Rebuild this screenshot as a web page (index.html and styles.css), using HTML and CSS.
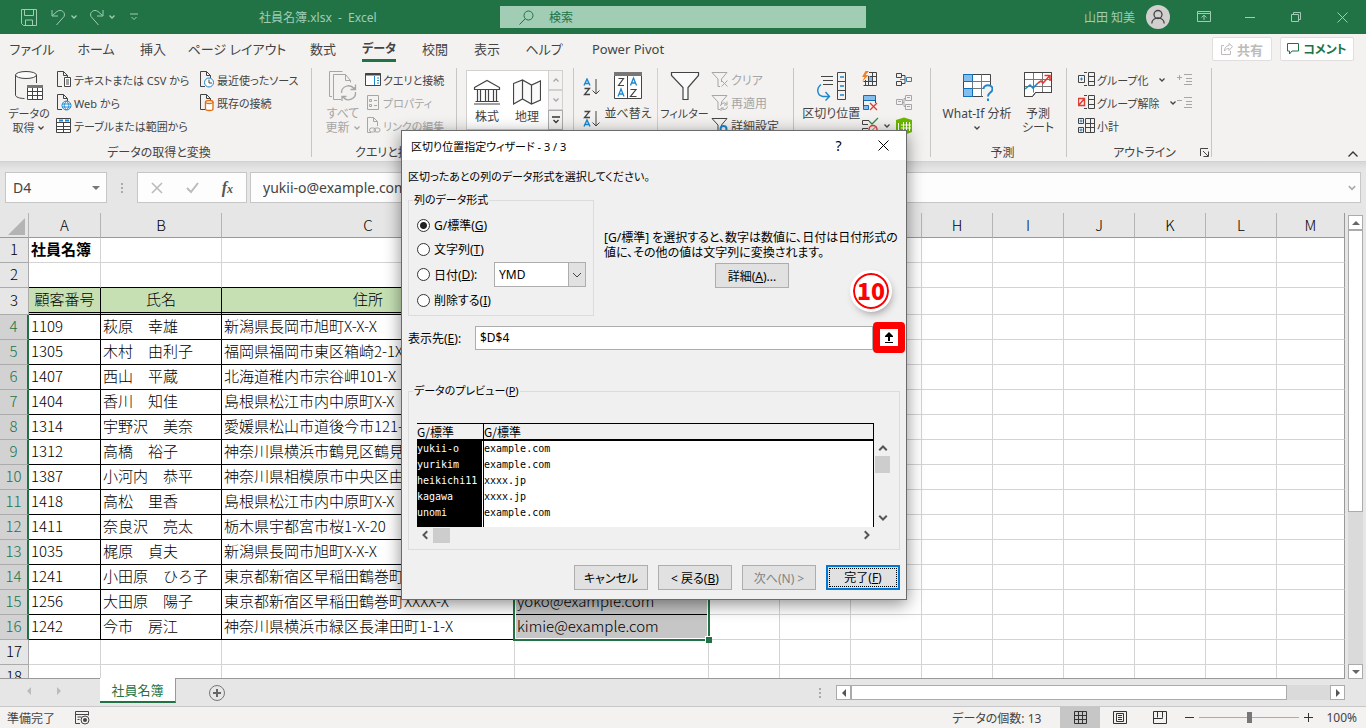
FILE: index.html
```html
<!DOCTYPE html>
<html lang="ja">

<head>
  <meta charset="UTF-8">
  <meta name="viewport" content="width=device-width, initial-scale=1.0">
  <title>社員名簿.xlsx - Excel</title>
  <link rel="stylesheet" href="styles.css">
</head>

<body>
  <svg class="defs" width="0" height="0">
    <symbol id="chev" viewBox="0 0 8 8"><path d="M1.500 2.500 4 5 6.500 2.500" fill="none" stroke="currentColor" stroke-width="1.300"/></symbol>
    <symbol id="page" viewBox="0 0 18 18"><path d="M6 15.500H1.500V.5h6l4 4V7M7.500.5v4h4" fill="none" stroke="#444"/></symbol>
    <symbol id="funnel" viewBox="0 0 18 18"><path d="M1 1.500h15L10.500 8v3M1 1.500 7 8v7.500h2" fill="none" stroke="currentColor"/></symbol>
  </svg>

  <header class="titlebar">
    <div class="quick">
      <button class="bare" aria-label="保存"><svg width="16" height="17" viewBox="0 0 16 17"><path d="M.5.5h15v16h-13l-2-2zM3.500.5v6h9v-6M4.500 16v-5h7v5" /></svg></button>
      <button class="bare undo" aria-label="元に戻す"><svg width="15" height="17" viewBox="0 0 15 17"><path d="M1 1v6h6M1.500 6.500 6 2.500c4-3 9 1 7 5L5.500 16"/></svg></button>
      <svg class="chev" width="8" height="8"><use href="#chev"/></svg>
      <button class="bare redo" aria-label="やり直し"><svg width="15" height="17" viewBox="0 0 15 17"><path d="M14 1v6H8M13.500 6.500 9 2.500c-4-3-9 1-7 5L9.500 16"/></svg></button>
      <svg class="chev" width="8" height="8"><use href="#chev"/></svg>
      <button class="bare custom" aria-label="カスタマイズ"><svg width="8" height="8" viewBox="0 0 8 8"><path d="M0 1h8M1.500 4 4 6.500 6.500 4"/></svg></button>
    </div>
    <div class="file-name">社員名簿.xlsx &nbsp;-&nbsp; Excel</div>
    <label class="search">
      <svg width="15" height="15" viewBox="0 0 15 15"><circle cx="9.500" cy="5.500" r="4.500"/><path d="M6.300 8.700.5 14.500"/></svg>
      <input type="text" placeholder="検索" aria-label="検索">
    </label>
    <div class="account">
      <span>山田 知美</span>
      <svg class="avatar" width="24" height="24" viewBox="0 0 24 24"><circle cx="12" cy="12" r="12" fill="#d2d0ce"/><g fill="none" stroke="#444" stroke-width="1.300"><circle cx="12" cy="9.500" r="4"/><path d="M5.800 18.500c0-3.500 3-5.500 6.200-5.500s6.200 2 6.200 5.500"/></g></svg>
    </div>
    <div class="window-buttons">
      <button class="bare" aria-label="リボンの表示"><svg width="14" height="12" viewBox="0 0 14 12"><path d="M.5.5h13v10H.5zM.5 2.500h13M7 9V4.500M4.500 6.500 7 4.200l2.500 2.300"/></svg></button>
      <button class="bare" aria-label="最小化"><svg width="10" height="12" viewBox="0 0 10 12"><path d="M0 6.500h10"/></svg></button>
      <button class="bare" aria-label="元のサイズ"><svg width="10" height="10" viewBox="0 0 10 10"><path d="M.5 2.500h7v7h-7zM2.500 2.500v-2h7v7h-2"/></svg></button>
      <button class="bare" aria-label="閉じる"><svg width="11" height="11" viewBox="0 0 11 11"><path d="m.5.5 10 10M10.500.5l-10 10"/></svg></button>
    </div>
  </header>

  <div class="tab-row">
    <nav class="tabs">
      <a href="#">ファイル</a>
      <a href="#">ホーム</a>
      <a href="#">挿入</a>
      <a href="#">ページ レイアウト</a>
      <a href="#">数式</a>
      <a href="#" class="active">データ</a>
      <a href="#">校閲</a>
      <a href="#">表示</a>
      <a href="#">ヘルプ</a>
      <a href="#">Power Pivot</a>
    </nav>
    <button class="share" disabled><svg width="12" height="12" viewBox="0 0 12 12"><path d="M3 2.500H.5v9h9V8M11.500 3.500 8 .5v2C5 2.500 3.500 5 3.500 8 5 6 6 5.500 8 5.500v2z"/></svg>共有</button>
    <button class="comment"><svg width="12" height="12" viewBox="0 0 12 12"><path d="M.5.500h11v7.500H5l-2.500 3V8h-2z"/></svg>コメント</button>
  </div>

  <section class="ribbon">
    <div class="group get-data">
      <div class="tools">
        <button class="big">
          <svg width="32" height="32" viewBox="0 0 32 32"><g fill="none" stroke="#444"><ellipse cx="13" cy="5" rx="10.500" ry="3.500" fill="#fafafa"/><path d="M2.500 5v20c0 2 4 3.500 9 3.500M23.500 5v8"/><path d="M14.500 15.500h15v14h-15zM14.500 21.500h15M14.500 25.500h15M19.500 18v11M24.500 18v11" fill="#fff"/></g><path d="M14 15h16v3H14z" fill="#777"/></svg>
          <span>データの<br>取得 <svg class="chev" width="8" height="8"><use href="#chev"/></svg></span>
        </button>
        <div class="stack first">
          <button><svg width="16" height="18" viewBox="0 0 16 18"><use href="#page" width="18" height="18"/><path d="M8.500 6.500h6v9h-6zM10 9h3M10 11h3M10 13h3" fill="#fff" stroke="#444"/></svg>テキストまたは CSV から</button>
          <button><svg width="16" height="18" viewBox="0 0 16 18"><use href="#page" width="18" height="18"/><circle cx="10.500" cy="11.500" r="4.500" fill="#fff" stroke="#1b87cf"/><path d="M6 10h9M6 13h9M10.500 7c-3 3-3 6 0 9M10.500 7c3 3 3 6 0 9" fill="none" stroke="#1b87cf"/></svg>Web から</button>
          <button><svg width="16" height="18" viewBox="0 0 16 18"><path d="M.5 1.500h14v14H.5zM.5 5.500h14M.5 9.500h14M.5 12.500h14M7.500 5v10" fill="#fff" stroke="#444"/><path d="M3 3.500h4M9 3.500h4" stroke="#1b87cf" stroke-width="2"/></svg>テーブルまたは範囲から</button>
        </div>
        <div class="stack">
          <button><svg width="16" height="18" viewBox="0 0 16 18"><use href="#page" width="18" height="18"/><circle cx="10" cy="11.500" r="4.500" fill="#fff" stroke="#1b87cf"/><path d="M10 8.500v3.500h3" fill="none" stroke="#444"/></svg>最近使ったソース</button>
          <button><svg width="16" height="18" viewBox="0 0 16 18"><use href="#page" width="18" height="18"/><path d="M6.500 8v7c0 2 7.500 2 7.500 0V8" fill="#fff" stroke="#e36c09" stroke-width="1.300"/><ellipse cx="10.250" cy="8" rx="3.750" ry="1.500" fill="#fff" stroke="#e36c09" stroke-width="1.300"/></svg>既存の接続</button>
        </div>
      </div>
      <div class="caption">データの取得と変換</div>
    </div>

    <div class="group queries">
      <div class="tools">
        <button class="big" disabled>
          <svg width="32" height="32" viewBox="0 0 32 32"><g fill="none" stroke="#a6a6a6"><path d="M5 26.500H2.500v-25h13M14 29.500H6.500v-25h12l5 6v2M18.500 4.500v6h5"/><path d="M14.500 23a7 7 0 0 1 12.500-4.500l1-1M28.500 22a7 7 0 0 1-12.500 5M28.500 14.500v5h-5M15 31v-4.500h4.500" stroke-width="1.300"/></g></svg>
          <span>すべて<br>更新 <svg class="chev" width="8" height="8"><use href="#chev"/></svg></span>
        </button>
        <div class="stack">
          <button><svg width="16" height="18" viewBox="0 0 16 18"><path d="M.5 2.500h15v12H.5z" fill="#fff" stroke="#444"/><path d="M0 3.500h16" stroke="#444" stroke-width="2"/><path d="M9.500 5v9M12 7h2M12 9.500h2M12 12h2" stroke="#1b87cf"/></svg>クエリと接続</button>
          <button disabled><svg width="16" height="18" viewBox="0 0 16 18"><path d="M2.500 1.500h11v14h-11zM4.500 5.500h2v2h-2zM4.500 10.500h2v2h-2zM9 6.500h3M9 11.500h3" fill="none" stroke="#a6a6a6"/></svg>プロパティ</button>
          <button disabled><svg width="16" height="18" viewBox="0 0 16 18"><path d="M6 15.500H2.500V.5h6l4 4V9M8.500.5v4h4" fill="none" stroke="#a6a6a6"/><rect x="4.500" y="11" width="6" height="4" rx="2" fill="none" stroke="#a6a6a6"/><rect x="9" y="11" width="6" height="4" rx="2" fill="none" stroke="#a6a6a6"/></svg>リンクの編集</button>
        </div>
      </div>
      <div class="caption">クエリと接続</div>
    </div>

    <div class="group types">
      <div class="tools">
        <div class="gallery">
          <button><svg width="28" height="28" viewBox="0 0 28 28"><path d="M1.500 8.500 14 1.500l12.500 7v2h-25zM4.500 10.500v12M7.500 10.500v12M12.500 10.500v12M15.500 10.500v12M20.500 10.500v12M23.500 10.500v12M2.500 22.500h23M1 25h26" fill="none" stroke="#444" stroke-width="1.200"/></svg>株式</button>
          <button><svg width="28" height="28" viewBox="0 0 28 28"><path d="m.5 4.500 9-3.500 9 5 9-4v19l-9 4-9-5-9 5zM9.500 1v19M18.500 6v19" fill="#fafafa" stroke="#444" stroke-width="1.200"/></svg>地理</button>
          <div class="gallery-nav">
            <button disabled aria-label="上へ"><svg class="chev up" width="8" height="8"><use href="#chev"/></svg></button>
            <button disabled aria-label="下へ"><svg class="chev" width="8" height="8"><use href="#chev"/></svg></button>
            <button class="more" aria-label="その他"><svg width="8" height="8" viewBox="0 0 8 8"><path d="M0 1h8M1.500 4 4 6.500 6.500 4" fill="none" stroke="#333" stroke-width="1.300"/></svg></button>
          </div>
        </div>
      </div>
    </div>

    <div class="group sort">
      <div class="tools">
        <div class="sort-keys">
          <button aria-label="昇順"><svg width="18" height="18" viewBox="0 0 18 18"><path d="M1 7.500 4 1l3 6.500M2 5.500h4" fill="none" stroke="#1b87cf" stroke-width="1.400"/><path d="M1.500 10.500h5l-5 6H7" fill="none" stroke="#444" stroke-width="1.300"/><path d="M13 1v15M9.500 12.500 13 16l3.500-3.500" fill="none" stroke="#444"/></svg></button>
          <button aria-label="降順"><svg width="18" height="18" viewBox="0 0 18 18"><path d="M1.500 1.500h5l-5 6H7" fill="none" stroke="#444" stroke-width="1.300"/><path d="M1 16.500 4 10l3 6.500M2 14.500h4" fill="none" stroke="#1b87cf" stroke-width="1.400"/><path d="M13 1v15M9.500 12.500 13 16l3.500-3.500" fill="none" stroke="#444"/></svg></button>
        </div>
        <button class="big">
          <svg width="32" height="32" viewBox="0 0 32 32"><path d="M2.500 2.500h27v26h-27zM15.500 5v24" fill="#fff" stroke="#444"/><path d="M2 2h28v4H2z" fill="#777"/><path d="M6.500 8.500h5l-5 7H12M18.500 19.500h5.500l-5.500 7h6" fill="none" stroke="#444" stroke-width="1.200"/><path d="M18.500 15.500 21.500 8l3 7.500M19.500 13h4M6 26.500 9 19l3 7.500M7 24h4" fill="none" stroke="#1b87cf" stroke-width="1.300"/></svg>
          <span>並べ替え</span>
        </button>
        <button class="big filter">
          <svg width="32" height="32" viewBox="0 0 32 32"><path d="M2.500 2.500h27v3L19 17.500v12h-5v-12L2.500 5.500z" fill="#fafafa" stroke="#444" stroke-width="1.200"/></svg>
          <span>フィルター</span>
        </button>
        <div class="stack">
          <button disabled><svg width="18" height="18" viewBox="0 0 18 18"><use href="#funnel" width="18" height="18"/><path d="m10.500 9.500 6 6M16.500 9.500l-6 6" stroke="currentColor"/></svg>クリア</button>
          <button disabled><svg width="18" height="18" viewBox="0 0 18 18"><use href="#funnel" width="18" height="18"/><path d="M9.500 12a3.500 3.500 0 0 1 6-2M16.500 12.500a3.500 3.500 0 0 1-6 2M16 7.500V11h-3M10 17v-3h3" fill="none" stroke="currentColor"/></svg>再適用</button>
          <button><svg width="18" height="18" viewBox="0 0 18 18"><use href="#funnel" width="18" height="18"/><circle cx="12.500" cy="12" r="3" fill="none" stroke="#1b87cf" stroke-width="2"/></svg>詳細設定</button>
        </div>
      </div>
    </div>

    <div class="group data-tools">
      <div class="tools">
        <button class="big">
          <svg width="32" height="32" viewBox="0 0 32 32"><path d="M22.500 2.500h8v27h-8zM22.500 11.500h8M22.500 20.500h8M6 6.500h12M8 10.500h10M8 14.500h10" fill="none" stroke="#444"/><path d="M25 7h4M25 16h4M25 25h4" stroke="#1b87cf" stroke-width="1.500"/><path d="M6 14.500c-5 4-4 11 2 12h6M10.500 22l4 4.500-4 4" fill="none" stroke="#1b87cf" stroke-width="1.400"/></svg>
          <span>区切り位置</span>
        </button>
        <div class="stack icons">
          <button aria-label="フラッシュ フィル"><svg width="18" height="18" viewBox="0 0 18 18"><path d="M8 1.500h7.500v13h-13M4.500 9v5.500M8.500 5.500h7M2.500 10.500h13M11.500 1v13M7.500 5v9" fill="none" stroke="#444"/><path d="M8 6h3v4H8z" fill="#83beec"/><path d="M4.500 0 1 6h2.500L1 11l6.500-7H4.500L8 0z" fill="#f08022"/></svg></button>
          <button aria-label="重複の削除"><svg width="18" height="18" viewBox="0 0 18 18"><path d="M2.500 1.500h12v5h-12zM2.500 11.500h5v4h-5z" fill="#83beec" stroke="#0f6fb8"/><path d="M2.500 6v6M14.500 6v3" stroke="#444"/><path d="m9 9 7 7M16 9l-7 7" stroke="#e03c31" stroke-width="1.300"/></svg></button>
          <button aria-label="データの入力規則"><svg width="18" height="18" viewBox="0 0 18 18"><path d="M8 3.500H1.500v4H7M7 11.500H1.500v4H7" fill="none" stroke="#444"/><path d="m8 4 3 3 6-6" fill="none" stroke="#2f8f46" stroke-width="1.300"/><circle cx="12" cy="12.500" r="4" fill="none" stroke="#e03c31" stroke-width="1.400"/><path d="m9 15.500 6-6" stroke="#e03c31"/></svg><svg class="chev" width="8" height="8"><use href="#chev"/></svg></button>
        </div>
        <div class="stack icons">
          <button aria-label="統合"><svg width="18" height="18" viewBox="0 0 18 18"><path d="M1.500 2.500h5v4h-5zM1.500 10.500h5v4h-5zM7 4.500h3v8H7" fill="none" stroke="#444"/><path d="M5 8.500h5M11.500 6.500h5v4h-5z" fill="none" stroke="#1b87cf"/></svg></button>
          <button disabled aria-label="リレーションシップ"><svg width="18" height="18" viewBox="0 0 18 18"><path d="M1.500 5.500h6v5h-6zM10.500 1.500h6v5h-6zM10.500 10.500h6v5h-6zM7.500 8.500H9v-4h1.500M9 8.500v4h1.500M3 7.500h3M12 3.500h3M12 12.500h3" fill="none" stroke="#a6a6a6"/></svg></button>
          <button aria-label="データ モデルの管理"><svg width="18" height="18" viewBox="0 0 18 18"><path d="m1 3 8-2.500L17 3v12l-8 3-8-3z" fill="#6bb700"/><path d="M3.500 6v8M6 8h10M6 11h10M8.500 5v10M11.500 5v10M14.500 5v9" stroke="#fff"/></svg></button>
        </div>
      </div>
    </div>

    <div class="group forecast">
      <div class="tools">
        <button class="big">
          <svg width="32" height="32" viewBox="0 0 32 32"><path d="M2.500 4.500h27v22h-27z" fill="#fff" stroke="#444"/><path d="M2.500 11.500h27M2.500 18.500h27M11.500 4.500v22M20.500 4.500v22" stroke="#777"/><path d="M2.500 4.500h9v7h-9zM2.500 18.500h9v8h-9z" fill="#83beec" stroke="#0f6fb8"/><path d="M22 15h10v17H22z" fill="#f3f2f1"/><path d="M22.500 19c0-5 9-5 9 0 0 4-4.500 3-4.500 7.500M27 28.500v2.500" fill="none" stroke="#1b87cf" stroke-width="2"/></svg>
          <span>What-If 分析<br><svg class="chev" width="8" height="8"><use href="#chev"/></svg></span>
        </button>
        <button class="big">
          <svg width="32" height="32" viewBox="0 0 32 32"><path d="M2.500 2.500h27v20h-16l-3 4h-8z" fill="#fff" stroke="#444"/><path d="M2.500 9.500h27M2.500 16.500h27M11.500 2.500v20M20.500 2.500v20" stroke="#777"/><path d="M2.500 2.500h27v20h-16l-3 4h-8z" fill="none" stroke="#444"/><path d="m3 19 5-4 3 3 5-5" fill="none" stroke="#1b87cf" stroke-width="1.600"/><path d="m16 13 3-2 2 2 6.500-7M22.500 5.500H28V11" fill="none" stroke="#e03c31" stroke-width="1.600"/></svg>
          <span>予測<br>シート</span>
        </button>
      </div>
      <div class="caption">予測</div>
    </div>

    <div class="group outline">
      <div class="tools">
        <div class="stack">
          <button><svg width="18" height="18" viewBox="0 0 18 18"><path d="M.5 4.500h6v7h-6zM10.500 1.500h6v13h-6zM10.500 5.500h6M10.500 10.500h6M9 1.500H6M9 14.500H6" fill="none" stroke="#444"/><path d="M2 8h3M3.500 6.500v3" stroke="#1b87cf"/></svg>グループ化 <svg class="chev" width="8" height="8"><use href="#chev"/></svg></button>
          <button><svg width="18" height="18" viewBox="0 0 18 18"><path d="M10.500 1.500h6v13h-6zM10.500 5.500h6M10.500 10.500h6M9 1.500H6M9 14.500H6" fill="none" stroke="#444"/><path d="M.5 4.500h6v7h-6zM.5 11.500l6-7" fill="none" stroke="#e03c31" stroke-width="1.400"/></svg>グループ解除 <svg class="chev" width="8" height="8"><use href="#chev"/></svg></button>
          <button><svg width="18" height="18" viewBox="0 0 18 18"><path d="M.5 1.500h5v5h-5zM.5 10.500h5v5h-5zM7.500 1.500h9v14h-9zM7.500 6.500h9M7.500 10.500h9M12.500 1.500v14" fill="none" stroke="#444"/><path d="M1.500 4h3M3 2.500v3M1.500 13h3M3 11.500v3" stroke="#1b87cf"/></svg>小計</button>
        </div>
        <div class="stack details">
          <button disabled aria-label="詳細の表示"><svg width="16" height="16" viewBox="0 0 16 16"><path d="M0 5.500h5M2.500 3v5M7 2.500h8M9 6.500h6M9 9.500h6M7 12.500h8" stroke="#a6a6a6"/></svg></button>
          <button disabled aria-label="詳細を表示しない"><svg width="16" height="16" viewBox="0 0 16 16"><path d="M0 5.500h5M7 2.500h8M9 6.500h6M9 9.500h6M7 12.500h8" stroke="#a6a6a6"/></svg></button>
        </div>
      </div>
      <div class="caption">アウトライン</div>
      <button class="launcher" aria-label="アウトラインの設定"><svg width="9" height="9" viewBox="0 0 9 9"><path d="M.5 8V.5H8M3 3l5 5M8.500 3.500v5h-5" fill="none" stroke="#444"/></svg></button>
    </div>
    <button class="collapse" aria-label="リボンを折りたたむ"><svg width="10" height="6" viewBox="0 0 10 6"><path d="M.5 5.500 5 1l4.500 4.500" fill="none" stroke="#333" stroke-width="1.300"/></svg></button>
  </section>

  <div class="formula-row">
    <div class="name-box">
      <input type="text" value="D4" aria-label="名前ボックス">
      <svg width="8" height="4" viewBox="0 0 8 4"><path d="M0 0h8L4 4z" fill="#777"/></svg>
    </div>
    <div class="dots"><i></i><i></i><i></i></div>
    <div class="fx-box">
      <svg width="12" height="12" viewBox="0 0 12 12"><path d="m1 1 10 10M11 1 1 11" stroke="#bbb" stroke-width="1.600"/></svg>
      <svg width="13" height="12" viewBox="0 0 13 12"><path d="m1 6 4 4 7-9" fill="none" stroke="#bbb" stroke-width="2"/></svg>
      <em>f<small>x</small></em>
    </div>
    <div class="formula">
      <input type="text" value="yukii-o@example.com" aria-label="数式バー">
      <svg class="chev" width="10" height="10"><use href="#chev"/></svg>
    </div>
  </div>

  <main class="sheet">
    <div class="sheet-view">
      <table class="cells">
        <colgroup>
          <col class="c-row"><col class="c-id"><col class="c-name"><col class="c-address"><col class="c-mail">
          <col class="c-std"><col class="c-std"><col class="c-std"><col class="c-std"><col class="c-std"><col class="c-std"><col class="c-std"><col class="c-std"><col>
        </colgroup>
        <thead>
          <tr>
            <th class="corner"><svg width="17" height="17" viewBox="0 0 17 17"><path d="M17 0v17H0z" fill="#b4b4b4"/></svg></th>
            <th>A</th><th>B</th><th>C</th><th class="on">D</th><th>E</th><th>F</th><th>G</th><th>H</th><th>I</th><th>J</th><th>K</th><th>L</th><th>M</th>
          </tr>
        </thead>
        <tbody id="rows"></tbody>
      </table>
    </div>
    <div class="vscroll">
      <button aria-label="上へスクロール"><svg width="8" height="4" viewBox="0 0 8 4"><path d="M0 4h8L4 0z" fill="#666"/></svg></button>
      <div class="track"><div class="thumb"></div></div>
      <button aria-label="下へスクロール"><svg width="8" height="4" viewBox="0 0 8 4"><path d="M0 0h8L4 4z" fill="#666"/></svg></button>
    </div>
  </main>

  <div class="sheet-bar">
    <div class="sheet-nav">
      <svg width="4" height="8" viewBox="0 0 4 8"><path d="M4 0v8L0 4z" fill="#bbb"/></svg>
      <svg width="4" height="8" viewBox="0 0 4 8"><path d="M0 0v8l4-4z" fill="#bbb"/></svg>
    </div>
    <button class="sheet-tab">社員名簿</button>
    <button class="bare add" aria-label="新しいシート"><svg width="16" height="16" viewBox="0 0 16 16"><circle cx="8" cy="8" r="7.500" fill="none" stroke="#777"/><path d="M4 8h8M8 4v8" stroke="#666" stroke-width="2"/></svg></button>
    <div class="dots"><i></i><i></i><i></i></div>
    <div class="hscroll">
      <button aria-label="左へスクロール"><svg width="4" height="8" viewBox="0 0 4 8"><path d="M4 0v8L0 4z" fill="#555"/></svg></button>
      <div class="track"><div class="thumb"></div></div>
      <button aria-label="右へスクロール"><svg width="4" height="8" viewBox="0 0 4 8"><path d="M0 0v8l4-4z" fill="#555"/></svg></button>
    </div>
  </div>

  <footer class="status">
    <span>準備完了</span>
    <svg class="macro" width="15" height="14" viewBox="0 0 15 14"><path d="M5 12.500H.5V.5h13v4M.5 3.500h13M2.500 6h4M2.500 8.500h2" fill="none" stroke="#444"/><circle cx="10" cy="9" r="4" fill="none" stroke="#444"/><circle cx="10" cy="9" r="2" fill="#444"/></svg>
    <span class="count">データの個数: 13</span>
    <div class="views">
      <button class="active" aria-label="標準"><svg width="13" height="13" viewBox="0 0 13 13"><path d="M.5.500h12v12H.5zM.5 4.500h12M.5 8.500h12M4.500.5v12M8.500.5v12"/></svg></button>
      <button aria-label="ページ レイアウト"><svg width="14" height="13" viewBox="0 0 14 13"><path d="M.5.500h13v12H.5zM3.500 2.500h7v8h-7zM5 4.500h4M5 6.500h4M5 8.500h4"/></svg></button>
      <button aria-label="改ページ プレビュー"><svg width="14" height="13" viewBox="0 0 14 13"><path d="M.5.500h13v12H.5zM4.500.5v6M9.500.5v6M.5 7.500h9v-1"/></svg></button>
    </div>
    <button class="bare step" aria-label="縮小"><svg width="9" height="9" viewBox="0 0 9 9"><path d="M0 4.500h9"/></svg></button>
    <input class="zoom" type="range" min="0" max="100" value="50" aria-label="ズーム">
    <button class="bare step" aria-label="拡大"><svg width="9" height="9" viewBox="0 0 9 9"><path d="M0 4.500h9M4.500 0v9"/></svg></button>
    <span class="percent">100%</span>
  </footer>

  <!-- 区切り位置指定ウィザード -->
  <div class="wizard" role="dialog" aria-labelledby="wizard-title">
    <div class="wizard-head">
      <span id="wizard-title">区切り位置指定ウィザード - 3 / 3</span>
      <button class="bare help" aria-label="ヘルプ">?</button>
      <button class="bare" aria-label="閉じる"><svg width="11" height="11" viewBox="0 0 11 11"><path d="m.5.5 10 10M10.500.5l-10 10" stroke="#000"/></svg></button>
    </div>
    <div class="wizard-body">
      <p class="lead">区切ったあとの列のデータ形式を選択してください。</p>
      <div class="options">
        <fieldset class="formats">
          <legend>列のデータ形式</legend>
          <label><input type="radio" name="format" checked>G/標準(<u>G</u>)</label>
          <label><input type="radio" name="format">文字列(<u>T</u>)</label>
          <div class="date-row">
            <label><input type="radio" name="format">日付(<u>D</u>):</label>
            <div class="select">
              <select aria-label="日付の形式"><option>YMD</option></select>
              <svg width="12" height="12" viewBox="0 0 12 12"><path d="M2 4l4 4 4-4" fill="none" stroke="#444"/></svg>
            </div>
          </div>
          <label><input type="radio" name="format">削除する(<u>I</u>)</label>
        </fieldset>
        <div class="hint">
          <p>[G/標準] を選択すると、数字は数値に、日付は日付形式の<br>値に、その他の値は文字列に変換されます。</p>
          <button class="push">詳細(<u>A</u>)...</button>
        </div>
      </div>
      <div class="dest">
        <label for="dest">表示先(<u>E</u>):</label>
        <input type="text" id="dest" value="$D$4">
        <button class="pick" aria-label="範囲を選択"><svg width="10" height="11" viewBox="0 0 10 11"><path d="M5 0 1 4v1h3v4h2V5h3V4zM1 10h8v1H1z" fill="#000"/></svg></button>
        <div class="badge">10</div>
      </div>
      <fieldset class="preview">
        <legend>データのプレビュー(<u>P</u>)</legend>
        <div class="preview-top">
          <div class="preview-view">
            <table>
              <thead><tr><th>G/標準</th><th>G/標準</th></tr></thead>
              <tbody>
                <tr><td>yukii-o</td><td>example.com</td></tr>
                <tr><td>yurikim</td><td>example.com</td></tr>
                <tr><td>heikichi11</td><td>xxxx.jp</td></tr>
                <tr><td>kagawa</td><td>xxxx.jp</td></tr>
                <tr><td>unomi</td><td>example.com</td></tr>
                <tr><td></td><td></td></tr>
              </tbody>
            </table>
          </div>
          <div class="pv">
            <svg class="chev up" width="12" height="12"><use href="#chev"/></svg>
            <div class="thumb"></div>
            <svg class="chev" width="12" height="12"><use href="#chev"/></svg>
          </div>
        </div>
        <div class="ph">
          <svg class="chev left" width="12" height="12"><use href="#chev"/></svg>
          <div class="thumb"></div>
          <svg class="chev right" width="12" height="12"><use href="#chev"/></svg>
        </div>
      </fieldset>
      <div class="actions">
        <button class="push">キャンセル</button>
        <button class="push">&lt; 戻る(<u>B</u>)</button>
        <button class="push" disabled>次へ(N) &gt;</button>
        <button class="push primary"><span>完了(<u>F</u>)</span></button>
      </div>
    </div>
  </div>

  <script src="script.js"></script>
</body>

</html>
```
FILE: styles.css
```css
* {
  box-sizing: border-box;
}
body {
  margin: 0;
  height: 100vh;
  display: flex;
  flex-direction: column;
  overflow: hidden;
  position: relative;
  background: #e6e6e6;
  color: #444;
  font-family: "Noto Sans", "Noto Sans CJK JP", sans-serif;
  font-size: 12px;
  font-feature-settings: "palt";
}
button,
input,
select {
  font: inherit;
  font-feature-settings: inherit;
  color: inherit;
}
button {
  margin: 0;
  padding: 0;
  border: 0;
  background: none;
}
p {
  margin: 0;
}
svg {
  flex: none;
  display: block;
}
.defs {
  position: absolute;
}
.bare {
  display: flex;
  align-items: center;
  justify-content: center;
}

/* タイトルバー */
.titlebar {
  display: flex;
  align-items: center;
  flex: none;
  height: 34px;
  background: #217346;
  color: #a0cdb4;
}
.titlebar svg {
  fill: none;
  stroke: #a0cdb4;
}
.titlebar .chev {
  stroke: none;
}
.quick {
  display: flex;
  align-items: center;
  width: 259px;
  padding-left: 21px;
}
.quick .undo {
  margin-left: 14px;
  margin-right: 4px;
}
.quick .redo {
  margin-left: 11px;
  margin-right: 4px;
}
.quick .custom {
  margin-left: 14px;
}
.file-name {
  width: 241px;
}
.search {
  display: flex;
  align-items: center;
  gap: 15px;
  width: 366px;
  height: 22px;
  padding-left: 19px;
  background: #a0cdb4;
}
.search svg {
  stroke: #217346;
}
.search input {
  flex: 1;
  min-width: 0;
  padding: 0;
  border: 0;
  background: none;
}
.search input::placeholder {
  color: #217346;
  opacity: 1;
}
.account {
  flex: 1;
  display: flex;
  align-items: center;
  justify-content: flex-end;
  gap: 11px;
}
.account .avatar {
  stroke: none;
}
.window-buttons {
  display: flex;
  width: 196px;
  padding-left: 11px;
}
.window-buttons .bare {
  width: 46px;
  height: 34px;
}

/* タブ */
.tab-row {
  display: flex;
  flex: none;
  height: 32px;
  padding: 3px 12px 0 0;
  background: #f3f2f1;
}
.tabs {
  flex: 1;
  display: grid;
  grid-template-columns: 64px 64px 50px 118px 54px 58px 54px 50px 64px 104px;
}
.tabs a {
  justify-self: center;
  height: 25px;
  line-height: 24px;
  color: #444;
  font-size: 13px;
  text-decoration: none;
  white-space: nowrap;
}
.tabs .active {
  border-bottom: 3px solid #217346;
  font-size: 12px;
  font-weight: bold;
}
.share,
.comment {
  display: flex;
  align-items: center;
  justify-content: center;
  gap: 4px;
  height: 24px;
  border: 1px solid #e1dfdd;
  border-radius: 2px;
  background: #fff;
  font-weight: bold;
}
.share {
  width: 60px;
  margin-right: 8px;
  color: #bdbbb9;
  font-size: 13px;
}
.comment {
  width: 74px;
  color: #217346;
}
.share svg,
.comment svg {
  fill: none;
  stroke: currentColor;
}

/* リボン */
.ribbon {
  position: relative;
  display: flex;
  flex: none;
  height: 95px;
  background: #f3f2f1;
}
.group {
  position: relative;
  display: flex;
  flex-direction: column;
  justify-content: space-between;
  height: 89px;
  margin-top: 2px;
  border-right: 1px solid #c8c6c4;
}
.tools {
  display: flex;
  height: 72px;
}
.caption {
  height: 13px;
  line-height: 17px;
  text-align: center;
  white-space: nowrap;
}
.get-data {
  width: 312px;
  padding-left: 7px;
}
.queries {
  width: 145px;
  padding-left: 9px;
}
.types {
  width: 117px;
  padding: 2px 10px 0 9px;
}
.sort {
  width: 220px;
  padding-left: 9px;
}
.data-tools {
  width: 137px;
  padding-left: 8px;
}
.forecast {
  width: 136px;
  padding-left: 8px;
}
.outline {
  width: 145px;
  padding-left: 11px;
}
.big {
  display: flex;
  flex-direction: column;
  align-items: center;
  width: 44px;
  padding-top: 2px;
  line-height: 14px;
  white-space: nowrap;
}
.big > svg {
  margin-bottom: 5px;
}
.big .chev,
.stack .chev {
  display: inline-block;
}
button:disabled {
  color: #a6a6a6;
}
.share:disabled {
  color: #bdbbb9;
}
.stack {
  display: flex;
  flex-direction: column;
}
.stack button {
  display: flex;
  align-items: center;
  gap: 2px;
  height: 23px;
  white-space: nowrap;
}
.stack.first {
  width: 143px;
  margin-left: 5px;
}
.get-data .stack,
.queries .stack,
.outline .stack,
.get-data .big,
.filter {
  font-size: 11px;
}
.gallery {
  display: flex;
  width: 97px;
  height: 60px;
  border: 1px solid #d2d0ce;
  background: #fff;
}
.gallery > button {
  width: 40px;
  display: flex;
  flex-direction: column;
  align-items: center;
  justify-content: space-between;
  padding: 8px 0 4px;
  line-height: 16px;
}
.gallery-nav {
  width: 15px;
  margin: -1px -1px -1px auto;
}
.gallery-nav button {
  display: flex;
  align-items: center;
  justify-content: center;
  width: 15px;
  height: 20px;
  border: 1px solid #d2d0ce;
  background: #f3f2f1;
}
.gallery-nav .more {
  border-color: #aaa;
}
.up {
  transform: rotate(180deg);
}
.left {
  transform: rotate(90deg);
}
.right {
  transform: rotate(-90deg);
}
.sort-keys {
  display: flex;
  flex-direction: column;
  gap: 14px;
  padding: 10px 2px 0 0;
}
.sort .big {
  width: 50px;
}
.sort .filter {
  margin-left: 4px;
  border-left: 1px solid #d2d0ce;
  width: 54px;
}
.data-tools .big {
  width: 64px;
}
.icons {
  width: 38px;
}
.icons button {
  gap: 4px;
}
.forecast .big {
  width: 76px;
}
.forecast .big + .big {
  width: 46px;
}
.outline .stack {
  width: 108px;
}
.outline .stack button {
  gap: 1px;
}
.outline .stack .chev {
  margin-left: 8px;
}
.launcher {
  position: absolute;
  right: 2px;
  bottom: 0;
}
.collapse {
  position: absolute;
  right: 8px;
  bottom: 4px;
}

/* 数式バー */
.formula-row {
  display: flex;
  flex: none;
  height: 52px;
  padding: 10px 5px;
  border-top: 1px solid #d2d2d2;
  background: linear-gradient(#d8d8d8, #e6e6e6 8px);
}
.formula-row > div {
  display: flex;
  align-items: center;
  height: 31px;
}
.formula-row .dots {
  gap: 2px;
}
.name-box,
.fx-box,
.formula {
  border: 1px solid #c6c6c6;
  background: #fdfdfd;
}
.name-box {
  width: 102px;
  padding: 0 6px 0 7px;
}
.name-box input,
.formula input {
  flex: 1;
  min-width: 0;
  padding: 0;
  border: 0;
  background: none;
  font-size: 14px;
}
.dots {
  display: flex;
  flex-direction: column;
  justify-content: center;
  gap: 2px;
  width: 30px;
}
.dots i {
  width: 2px;
  height: 2px;
  background: #aaa;
}
.fx-box {
  width: 110px;
  justify-content: space-between;
  padding: 0 13px;
}
.fx-box em {
  color: #555;
  font: italic bold 16px "Liberation Serif", serif;
}
.fx-box small {
  font-size: 12px;
}
.formula {
  flex: 1;
  margin-left: 3px;
  padding: 0 3px 0 12px;
}
.formula .chev {
  color: #aaa;
}

/* シート */
.sheet {
  flex: 1;
  display: flex;
  min-height: 0;
}
.sheet-view {
  flex: 1;
  min-width: 0;
  overflow: hidden;
  border-bottom: 1px solid #999;
}
.cells {
  width: 100%;
  table-layout: fixed;
  border-collapse: separate;
  border-spacing: 0;
  background: #fff;
  color: #000;
  font-family: "Noto Sans CJK JP", sans-serif;
  font-size: 15px;
  font-weight: 300;
  font-feature-settings: normal;
  line-height: 22px;
}
.c-row {
  width: 29px;
}
.c-id {
  width: 72px;
}
.c-name {
  width: 121px;
}
.c-address {
  width: 293px;
}
.c-mail {
  width: 194px;
}
.c-std {
  width: 71px;
}
.cells th,
.cells td {
  height: 25px;
  padding: 0 2px 2px;
  border-right: 1px solid #d4d4d4;
  border-bottom: 1px solid #d4d4d4;
  text-align: left;
  white-space: nowrap;
  overflow: hidden;
}
.cells th {
  padding: 0 0 2px;
  font-weight: 300;
  text-align: center;
  background: #e6e6e6;
  border-color: #ababab;
}
.cells thead th {
  padding: 0;
  border-right-color: #b4b4b4;
  border-bottom-color: #999;
}
.cells tr > :last-child {
  border-right-color: #999;
}
.cells .corner svg {
  margin: 3px 3px 0 auto;
}
.cells .on {
  background: #d2d2d2;
  color: #217346;
}
.cells tbody .on {
  border-right: 2px solid #217346;
}
.cells .title {
  font-weight: bold;
}
.cells .boxed {
  border-color: #000;
}
.cells .head {
  height: 27px;
  border-bottom: 3px double #000;
  background: #c6e0b4;
  text-align: center;
}
.cells .above {
  border-bottom-color: #000;
}
.cells .picked {
  background: #c6c6c6;
}
.cells .current {
  position: relative;
  overflow: visible;
}
.selection {
  position: absolute;
  top: -1px;
  left: -2px;
  width: 197px;
  height: 327px;
  border: 2px solid #217346;
  box-shadow: inset 0 0 0 1px #fff;
}
.selection::after {
  content: "";
  position: absolute;
  right: -4px;
  bottom: -4px;
  width: 6px;
  height: 6px;
  border: 1px solid #fff;
  border-width: 1px 0 0 1px;
  background: #217346;
}
.vscroll {
  display: flex;
  flex-direction: column;
  width: 21px;
  padding: 2px 3px 0;
}
.vscroll button,
.hscroll button {
  display: flex;
  align-items: center;
  justify-content: center;
  width: 15px;
  height: 15px;
  border: 1px solid #ababab;
  background: #fff;
}
.track {
  flex: 1;
  background: #dadada;
}
.vscroll .thumb {
  height: 65%;
  border: 1px solid #ababab;
  background: #fff;
}

/* シート見出し */
.sheet-bar {
  display: flex;
  flex: none;
  height: 27px;
  padding-right: 21px;
}
.sheet-nav {
  display: flex;
  gap: 26px;
  width: 100px;
  padding: 8px 0 0 27px;
}
.sheet-tab {
  width: 76px;
  height: 25px;
  margin-top: -1px;
  border: 1px solid #999;
  border-width: 0 1px 2px 0;
  border-bottom-color: #217346;
  background: #fff;
  color: #217346;
  font-size: 13px;
}
.add {
  width: 82px;
}
.sheet-bar .dots {
  margin-left: auto;
  width: 17px;
}
.hscroll {
  display: flex;
  width: 509px;
  margin-top: 6px;
}
.hscroll .track {
  height: 15px;
}
.hscroll .thumb {
  width: 91%;
  height: 15px;
  border: 1px solid #ababab;
  background: #fff;
}

/* ステータスバー */
.status {
  display: flex;
  align-items: center;
  flex: none;
  height: 22px;
  padding: 0 9px 0 7px;
  border-top: 1px solid #c8c8c8;
  background: #f3f2f1;
}
.macro {
  margin-left: 20px;
}
.count {
  margin-left: auto;
}
.views {
  display: flex;
  height: 100%;
  margin: 0 5px 0 19px;
}
.views button {
  display: flex;
  align-items: center;
  justify-content: center;
  width: 40px;
}
.views .active {
  background: #c6c6c6;
}
.views svg,
.step svg {
  fill: none;
  stroke: #333;
}
.zoom {
  appearance: none;
  width: 100px;
  height: 15px;
  margin: 0 5px;
  background: linear-gradient(#ababab, #ababab) center / 100% 1px no-repeat;
}
.zoom::-webkit-slider-thumb {
  appearance: none;
  width: 5px;
  height: 11px;
  background: #777;
}
.percent {
  margin-left: 13px;
}

/* ウィザード */
.wizard {
  position: absolute;
  left: 401px;
  top: 130px;
  width: 506px;
  border: 1px solid #6b6b6b;
  background: #f0f0f0;
  color: #000;
  box-shadow: 0 4px 16px rgba(0, 0, 0, 0.45);
}
.wizard-head {
  display: flex;
  align-items: center;
  height: 29px;
  padding-left: 9px;
  background: #fff;
}
#wizard-title {
  flex: 1;
}
.wizard-head .bare {
  width: 45px;
  height: 29px;
}
.wizard-head .help {
  font-size: 14px;
}
.wizard-body {
  padding: 8px 6px 9px;
}
.lead {
  line-height: 18px;
}
#wizard-title,
.lead,
.wizard legend {
  font-size: 11px;
}
.wizard fieldset {
  margin: 0;
  border: 1px solid #dcdcdc;
}
.wizard legend {
  padding: 0 1px;
  line-height: 18px;
}
.options {
  display: flex;
  margin-top: 5px;
}
.formats {
  flex: none;
  width: 186px;
  height: 125px;
  padding: 4px 7px 0 8px;
}
.formats legend,
.preview legend {
  margin-left: -4px;
}
.formats label {
  display: flex;
  align-items: center;
  height: 24px;
}
.formats input {
  appearance: none;
  width: 13px;
  height: 13px;
  margin: 0 4px 0 0;
  border: 1px solid #333;
  border-radius: 50%;
  background: #fff;
}
.formats input:checked {
  background: radial-gradient(#222 3px, #fff 4px);
}
.date-row {
  display: flex;
  align-items: center;
  justify-content: space-between;
  height: 27px;
}
.select {
  position: relative;
}
.select select {
  display: block;
  appearance: none;
  width: 92px;
  height: 25px;
  padding: 0 4px;
  border: 1px solid #adadad;
  border-radius: 0;
  background: linear-gradient(to right, #fff 73px, #adadad 73px, #adadad 74px, #e1e1e1 74px);
}
.select svg {
  position: absolute;
  right: 3px;
  top: 7px;
}
.hint {
  flex: 1;
  padding: 39px 0 0 10px;
}
.hint p {
  line-height: 15px;
  white-space: nowrap;
}
.hint .push {
  display: block;
  margin: 3px auto 0 111px;
}
.push {
  width: 74px;
  height: 25px;
  border: 1px solid #adadad;
  background: #e1e1e1;
  white-space: nowrap;
}
.push:disabled {
  color: #838383;
}
.primary {
  padding: 1px;
  border: 2px solid #0078d7;
}
.primary span {
  display: block;
  height: 19px;
  line-height: 17px;
  border: 1px dotted #000;
}
.dest {
  position: relative;
  display: flex;
  align-items: center;
  height: 31px;
  margin: 6px -5px 0 0;
}
.dest label {
  width: 67px;
}
.dest input {
  flex: 1;
  min-width: 0;
  height: 24px;
  padding: 0 4px;
  border: 1px solid #adadad;
  background: #fff;
}
.pick {
  display: flex;
  align-items: center;
  justify-content: center;
  width: 32px;
  height: 31px;
  border: 7px solid #f00;
  border-radius: 4px;
  background: #fff;
}
.badge {
  position: absolute;
  right: 16px;
  top: -49px;
  width: 36px;
  height: 36px;
  border: 2px solid #f00;
  border-radius: 50%;
  background: #fff;
  outline: 3px solid #fff;
  box-shadow: 2px 4px 8px rgba(0, 0, 0, 0.4);
  color: #f00;
  font: 900 23px/31px "Noto Sans CJK JP", "Open Sans", sans-serif;
  text-align: center;
}
.wizard .preview {
  height: 168px;
  margin-top: 29px;
  padding: 23px 8px 0;
}
.preview-top {
  display: flex;
}
.preview-view {
  flex: 1;
  height: 104px;
  overflow: hidden;
  border: 1px solid #000;
  border-width: 1px 1px 0 0;
  background: #fff;
}
.preview table {
  width: 100%;
  table-layout: fixed;
  border-spacing: 0;
  font-family: "DejaVu Sans Mono", "Noto Sans CJK JP", monospace;
  font-size: 10px;
  line-height: 16px;
}
.preview th,
.preview td {
  height: 16px;
  padding: 0;
  text-align: left;
}
.preview th {
  height: 17px;
  border-bottom: 2px solid #000;
  background: #f0f0f0;
  font-family: "Noto Sans CJK JP", sans-serif;
  font-size: 12px;
  font-weight: normal;
  font-feature-settings: normal;
  line-height: 15px;
}
.preview th:first-child,
.preview td:first-child {
  width: 67px;
  border-right: 1px solid #000;
}
.preview td:first-child {
  background: #000;
  color: #fff;
  box-shadow: inset -1px 0 #fff;
}
.pv {
  display: flex;
  flex-direction: column;
  align-items: center;
  width: 17px;
  padding: 19px 0 3px;
  color: #555;
}
.pv .thumb {
  width: 15px;
  height: 17px;
  margin-top: 2px;
  margin-bottom: auto;
  background: #cdcdcd;
}
.ph {
  display: flex;
  align-items: center;
  width: 458px;
  padding: 0 2px;
  color: #555;
}
.ph .thumb {
  width: 17px;
  height: 15px;
  margin: 1px auto 0 2px;
  background: #cdcdcd;
}
.actions {
  display: flex;
  justify-content: flex-end;
  gap: 10px;
  margin-top: 15px;
}
```
FILE: script.js
```js
const people = [
  ['1109', '萩原　幸雄', '新潟県長岡市旭町X-X-X', 'yukii-o@example.com'],
  ['1305', '木村　由利子', '福岡県福岡市東区箱崎2-1X', ''],
  ['1407', '西山　平蔵', '北海道稚内市宗谷岬101-X', ''],
  ['1404', '香川　知佳', '島根県松江市内中原町X-X', ''],
  ['1314', '宇野沢　美奈', '愛媛県松山市道後今市121-X', ''],
  ['1312', '高橋　裕子', '神奈川県横浜市鶴見区鶴見', ''],
  ['1387', '小河内　恭平', '神奈川県相模原市中央区由', ''],
  ['1418', '高松　里香', '島根県松江市内中原町X-X', ''],
  ['1411', '奈良沢　亮太', '栃木県宇都宮市桜1-X-20', ''],
  ['1035', '梶原　貞夫', '新潟県長岡市旭町X-X-X', ''],
  ['1241', '小田原　ひろ子', '東京都新宿区早稲田鶴巻町', ''],
  ['1256', '大田原　陽子', '東京都新宿区早稲田鶴巻町XXXX-X', 'yoko@example.com'],
  ['1242', '今市　房江', '神奈川県横浜市緑区長津田町1-1-X', 'kimie@example.com']
]
const EMPTY = '<td></td>'.repeat(9)

const row = (num, cells, on) => `<tr><th${on ? ' class="on"' : ''}>${num}</th>${cells}${EMPTY}</tr>`

let html = row(1, '<td class="title">社員名簿</td><td></td><td></td><td></td>')
html += row(2, '<td class="above"></td>'.repeat(4))
html += row(3, ['顧客番号', '氏名', '住所', ''].map(t => `<td class="boxed head">${t}</td>`).join(''))
people.forEach((p, i) => {
  const cells = p.map((t, n) => {
    // D列は選択範囲
    if (n < 3) return `<td class="boxed">${t}</td>`
    return i == 0
      ? `<td class="boxed current">${t}<div class="selection"></div></td>`
      : `<td class="boxed picked">${t}</td>`
  })
  html += row(i + 4, cells.join(''), true)
})
html += row(17, '<td></td>'.repeat(4))
html += row(18, '<td></td>'.repeat(4))
document.querySelector('#rows').innerHTML = html
```
